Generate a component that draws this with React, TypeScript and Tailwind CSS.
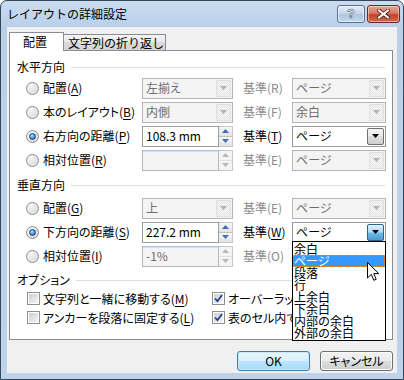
import React from "react";

const U = ({ children }: { children: React.ReactNode }) => (
  <span className="underline underline-offset-[2px] decoration-[1px]">{children}</span>
);

function Tri({ fill }: { fill: string }) {
  return (
    <svg width="7" height="4" viewBox="0 0 7 4">
      <path d="M0 0h7L3.5 4z" fill={fill} />
    </svg>
  );
}

function Radio({ checked }: { checked?: boolean }) {
  return (
    <span className="w-[13px] h-[13px] shrink-0 rounded-full border border-[#8b8d8f] bg-[radial-gradient(circle_at_40%_40%,#ffffff,#f0f0f0_40%,#c9c9c9)] flex items-center justify-center">
      {checked ? (
        <span className="w-[7px] h-[7px] rounded-full border border-[#173d7a] bg-[radial-gradient(circle_at_40%_35%,#c6f0ff,#4aa7ea_45%,#1a4e9c)]" />
      ) : (
        <span className="w-[7px] h-[7px] rounded-full bg-[radial-gradient(circle_at_40%_35%,#f6f6f6,#d6d6d6)]" />
      )}
    </span>
  );
}

function Check({ checked }: { checked?: boolean }) {
  return (
    <span className="w-[13px] h-[13px] shrink-0 border border-[#8e8f8f] bg-white flex items-center justify-center">
      <span className="w-[9px] h-[9px] bg-[linear-gradient(135deg,#cfcfcf,#f4f4f4)] flex items-center justify-center">
        {checked && (
          <svg width="9" height="9" viewBox="0 0 9 9">
            <path d="M1 4.5 L3.5 7.2 L8 1" fill="none" stroke="#1e3f8f" strokeWidth="1.8" />
          </svg>
        )}
      </span>
    </span>
  );
}

function Combo({
  text,
  className,
  disabled,
  focused,
  children,
}: {
  text: string;
  className: string;
  disabled?: boolean;
  focused?: boolean;
  children?: React.ReactNode;
}) {
  return (
    <div
      className={`relative flex h-[21px] items-stretch border ${
        disabled ? "border-[#b5b5b5] bg-[#f4f4f4] text-[#6d6d6d]" : "border-[#9a9a9a] bg-white"
      } ${className}`}
    >
      <span className="flex-1 flex items-center pl-[3px] whitespace-nowrap overflow-hidden">{text}</span>
      {disabled ? (
        <span className="w-[15px] m-[1px] flex items-center justify-center border border-[#e0e0e0] bg-[repeating-conic-gradient(#e4e4e4_0_25%,#f7f7f7_0_50%)] bg-[length:2px_2px]">
          <Tri fill="#b3b3b3" />
        </span>
      ) : (
        <span
          className={`w-[17px] m-[1px] flex items-center justify-center border rounded-[2px] ${
            focused
              ? "border-[#2c628b] bg-[linear-gradient(#e3f4fc,#b0def6_45%,#6cbbe5_55%,#4c9bce)]"
              : "border-[#707070] bg-[linear-gradient(#f2f2f2,#ebebeb_50%,#dddddd_50%,#cfcfcf)]"
          }`}
        >
          <Tri fill="#000000" />
        </span>
      )}
      {children}
    </div>
  );
}

function SpinEdit({ text, disabled }: { text: string; disabled?: boolean }) {
  return (
    <div className="flex h-[21px] w-[91px]">
      <div
        className={`flex-1 border flex items-center pl-[3px] whitespace-nowrap ${
          disabled
            ? "border-[#b5b5b5] border-t-[#a9c6e8] bg-[#f4f4f4] text-[#6d6d6d] shadow-[inset_0_1px_0_#cfe0f3]"
            : "border-[#9c9c9c] bg-white"
        }`}
      >
        {text}
      </div>
      <div className="w-[14px] flex flex-col border border-l-0 border-[#c7c7c7] bg-[#f4f4f4]">
        <div
          className={`flex-1 flex items-center justify-center border-b ${
            disabled ? "border-[#e0e0e0]" : "border-[#c0c0c0] bg-[linear-gradient(#f7f7f7,#e3e3e3)]"
          }`}
        >
          <svg width="7" height="4" viewBox="0 0 7 4">
            <path d="M0 4h7L3.5 0z" fill={disabled ? "#b8b8b8" : "#3f6eb5"} />
          </svg>
        </div>
        <div
          className={`flex-1 flex items-center justify-center ${
            disabled ? "" : "bg-[linear-gradient(#f7f7f7,#e3e3e3)]"
          }`}
        >
          <Tri fill={disabled ? "#b8b8b8" : "#3f6eb5"} />
        </div>
      </div>
    </div>
  );
}

function Header({ text }: { text: string }) {
  return (
    <div className="flex items-center h-[14px] pl-[7px] pr-[7px]">
      <span className="whitespace-nowrap">{text}</span>
      <span className="flex-1 h-px bg-[#d5dfe5] ml-[6px]" />
    </div>
  );
}

function Row({
  checked,
  label,
  control,
  refLabel,
  refDisabled,
  right,
}: {
  checked?: boolean;
  label: React.ReactNode;
  control: React.ReactNode;
  refLabel: React.ReactNode;
  refDisabled?: boolean;
  right: React.ReactNode;
}) {
  return (
    <div className="flex items-center h-[24px] pl-[16px]">
      <div className="w-[116px] flex items-center">
        <Radio checked={checked} />
        <span className="ml-[4px] whitespace-nowrap">{label}</span>
      </div>
      {control}
      <span className={`ml-[10px] w-[49px] whitespace-nowrap ${refDisabled ? "text-[#8a8a8a]" : ""}`}>{refLabel}</span>
      {right}
    </div>
  );
}

const LIST = ["余白", "ページ", "段落", "行", "上余白", "下余白", "内部の余白", "外部の余白"];

export default function App() {
  return (
    <div className="relative w-[404px] h-[380px] overflow-hidden bg-white font-['Noto_Sans_CJK_JP',sans-serif] text-[12px] leading-[14px] text-black">
      <div className="w-[404px] h-[380px] rounded-t-[7px] border border-[#34465c] bg-[linear-gradient(#cadcf0,#b9d0e9_26px,#bcd3eb)] flex flex-col px-[6px] pb-[6px]">
        {/* title bar */}
        <div className="h-[26px] flex items-center">
          <span className="flex-1 text-[12px] whitespace-nowrap">レイアウトの詳細設定</span>
          <div className="flex items-center gap-[2px] -mr-[3px] -mt-[1px]">
            <div className="w-[28px] h-[18px] rounded-[3px] border border-[#56718f] bg-[linear-gradient(#e4edf7,#c5d6ea_45%,#aec6e0_55%,#c4d8ec)] flex items-center justify-center shadow-[inset_0_0_0_1px_rgba(255,255,255,0.6)]">
              <span className="text-[13px] font-bold text-white leading-none [-webkit-text-stroke:0.6px_#4b5d73] font-['Liberation_Sans',sans-serif]">?</span>
            </div>
            <div className="w-[33px] h-[18px] rounded-[3px] border border-[#6e2a1f] bg-[linear-gradient(#e8a594,#d77a66_45%,#c2422b_55%,#d3694f)] flex items-center justify-center shadow-[inset_0_0_0_1px_rgba(255,255,255,0.45)]">
              <svg width="13" height="10" viewBox="0 0 13 10">
                <path d="M2 1.5 L11 8.5 M11 1.5 L2 8.5" stroke="#4a1a12" strokeWidth="3.6" strokeLinecap="square" />
                <path d="M2 1.5 L11 8.5 M11 1.5 L2 8.5" stroke="#ffffff" strokeWidth="2" strokeLinecap="square" />
              </svg>
            </div>
          </div>
        </div>

        {/* client area */}
        <div className="flex-1 bg-[#f0f0f0] px-[2px] pt-[5px] flex flex-col">
          {/* tabs */}
          <div className="flex items-end h-[18px] w-[384px]">
            <div className="relative z-10 h-[19px] -mb-[1px] w-[55px] border border-b-0 border-[#898c95] bg-white flex items-center pl-[13px]">
              配置
            </div>
            <div className="h-[16px] w-[102px] border border-l-0 border-b-0 border-[#898c95] bg-[linear-gradient(#f4f4f4,#e8e8e8_50%,#dadada_50%,#d5d5d5)] flex items-center pl-[4px] whitespace-nowrap">
              文字列の折り返し
            </div>
          </div>

          {/* panel */}
          <div className="w-[384px] h-[290px] border border-[#898c95] bg-white flex flex-col pt-[9px] [font-feature-settings:'palt']">
            <Header text="水平方向" />
            <div className="h-[2px]" />
            <Row
              label={<>配置(<U>A</U>)</>}
              control={<Combo disabled text="左揃え" className="w-[91px]" />}
              refLabel="基準(R)"
              refDisabled
              right={<Combo disabled text="ページ" className="w-[94px]" />}
            />
            <Row
              label={<>本のレイアウト(<U>B</U>)</>}
              control={<Combo disabled text="内側" className="w-[91px]" />}
              refLabel="基準(F)"
              refDisabled
              right={<Combo disabled text="余白" className="w-[94px]" />}
            />
            <Row
              checked
              label={<>右方向の距離(<U>P</U>)</>}
              control={<SpinEdit text="108.3 mm" />}
              refLabel={<>基準(<U>T</U>)</>}
              right={<Combo text="ページ" className="w-[94px]" />}
            />
            <Row
              label={<>相対位置(<U>R</U>)</>}
              control={<SpinEdit disabled text="" />}
              refLabel="基準(E)"
              refDisabled
              right={<Combo disabled text="ページ" className="w-[94px]" />}
            />

            <div className="h-[6px]" />
            <Header text="垂直方向" />
            <div className="h-[4px]" />
            <Row
              label={<>配置(<U>G</U>)</>}
              control={<Combo disabled text="上" className="w-[91px]" />}
              refLabel="基準(E)"
              refDisabled
              right={<Combo disabled text="ページ" className="w-[94px]" />}
            />
            <Row
              checked
              label={<>下方向の距離(<U>S</U>)</>}
              control={<SpinEdit text="227.2 mm" />}
              refLabel={<>基準(<U>W</U>)</>}
              right={
                <Combo focused text="ページ" className="w-[94px] z-20">
                  <div className="absolute -left-px top-[18px] w-[94px] border border-black bg-white py-[1px] [font-feature-settings:normal]">
                    {LIST.map((t, i) => (
                      <div
                        key={t}
                        className={`h-[12px] text-[12px] leading-[12px] pl-[1px] whitespace-nowrap ${
                          i === 1 ? "bg-[#3399ff] text-white outline-1 outline-dotted outline-[#e0902c] -outline-offset-1" : ""
                        }`}
                      >
                        {t}
                      </div>
                    ))}
                  </div>
                </Combo>
              }
            />
            <Row
              label={<>相対位置(<U>I</U>)</>}
              control={<SpinEdit disabled text="-1%" />}
              refLabel="基準(O)"
              refDisabled
              right={<Combo disabled text="ページ" className="w-[94px]" />}
            />

            <div className="h-[5px]" />
            <Header text="オプション" />
            <div className="flex pl-[17px]">
              <div className="w-[185px] flex flex-col">
                <div className="h-[19px] flex items-center gap-[3px] mt-[2px]">
                  <Check />
                  <span className="whitespace-nowrap">文字列と一緒に移動する(<U>M</U>)</span>
                </div>
                <div className="h-[19px] flex items-center gap-[3px]">
                  <Check />
                  <span className="whitespace-nowrap">アンカーを段落に固定する(<U>L</U>)</span>
                </div>
              </div>
              <div className="flex flex-col">
                <div className="h-[19px] flex items-center gap-[3px] mt-[2px]">
                  <Check checked />
                  <span className="whitespace-nowrap">オーバーラップ</span>
                </div>
                <div className="h-[19px] flex items-center gap-[3px]">
                  <Check checked />
                  <span className="whitespace-nowrap">表のセル内で</span>
                </div>
              </div>
            </div>
          </div>

          {/* buttons */}
          <div className="w-[384px] flex justify-end gap-[10px] mt-[11px]">
            <button className="w-[73px] h-[20px] rounded-[3px] border border-[#3c7fb1] bg-[linear-gradient(#eaf6fd,#d9f0fc_50%,#bee6fd_50%,#a7d9f5)] shadow-[inset_0_0_0_1px_#c5e8fb] flex items-center justify-center">
              OK
            </button>
            <button className="w-[73px] h-[20px] rounded-[3px] border border-[#707070] bg-[linear-gradient(#f2f2f2,#ebebeb_50%,#dddddd_50%,#cfcfcf)] shadow-[inset_0_0_0_1px_#fbfbfb] flex items-center justify-center [font-feature-settings:'palt']">
              キャンセル
            </button>
          </div>
        </div>
      </div>

      {/* mouse cursor */}
      <svg className="absolute left-[367px] top-[262px] z-30" width="13" height="20" viewBox="0 0 13 20">
        <path d="M0.5 0.5 L0.5 16 L4.3 12.4 L6.8 18.3 L9.2 17.3 L6.8 11.6 L11.8 11.6 Z" fill="#ffffff" stroke="#000000" strokeWidth="1" strokeLinejoin="miter" />
      </svg>
    </div>
  );
}
